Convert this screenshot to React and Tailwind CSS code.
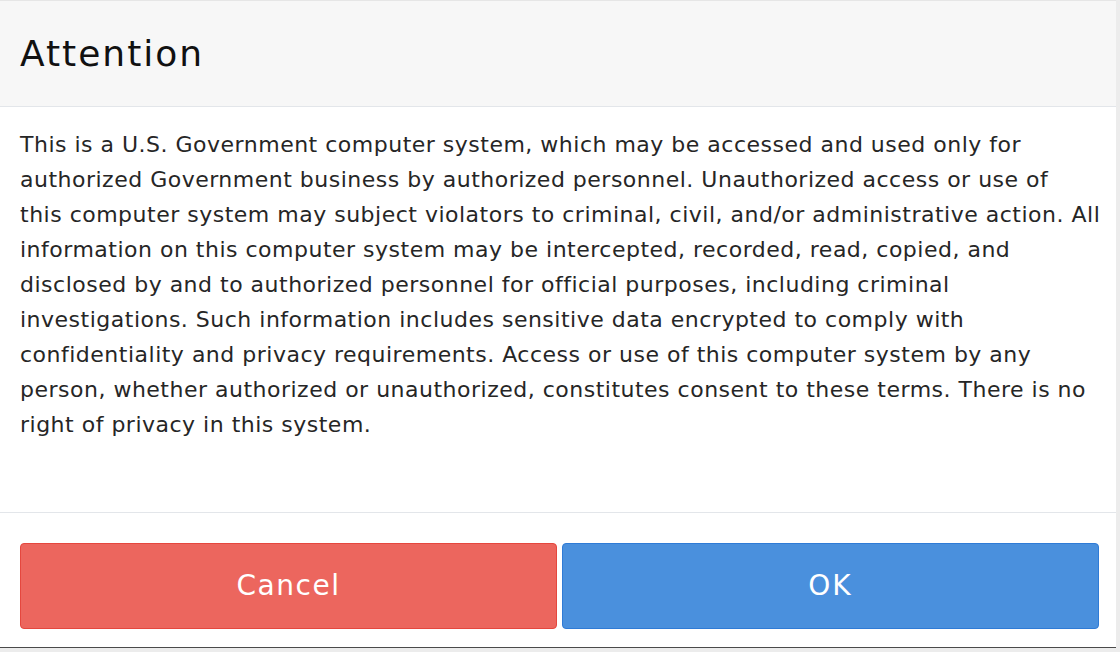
const lines = [
  'This is a U.S. Government computer system, which may be accessed and used only for',
  'authorized Government business by authorized personnel. Unauthorized access or use of',
  'this computer system may subject violators to criminal, civil, and/or administrative action. All',
  'information on this computer system may be intercepted, recorded, read, copied, and',
  'disclosed by and to authorized personnel for official purposes, including criminal',
  'investigations. Such information includes sensitive data encrypted to comply with',
  'confidentiality and privacy requirements. Access or use of this computer system by any',
  'person, whether authorized or unauthorized, constitutes consent to these terms. There is no',
  'right of privacy in this system.',
]

export default function App() {
  return (
    <div className="w-[1120px] h-[652px] bg-[#ececec] overflow-hidden font-['DejaVu_Sans',sans-serif]">
      <div className="w-[1116px] h-[648px] bg-white border-t border-[#e6e6e6] border-b border-b-[#4a4a4a] flex flex-col">
        <div className="h-[106px] bg-[#f7f7f7] border-b border-[#e3e6ea] flex items-center px-5">
          <h2 className="text-[36px] tracking-[2px] text-[#111] font-normal">Attention</h2>
        </div>
        <div className="h-[405px] pt-5 pl-5 pr-[17px] text-[22px] tracking-[0.5px] leading-[35px] text-[#262626]">
          {lines.map((l) => (
            <div key={l} className="whitespace-nowrap">{l}</div>
          ))}
        </div>
        <div className="flex-1 border-t border-[#e3e6ea] pl-5 pr-[17px] pt-[30px] flex gap-[5px]">
          <button className="flex-1 h-[86px] rounded-[4px] bg-[#ec665e] border border-[#e5473e] text-white text-[28px] tracking-[1.5px]">
            Cancel
          </button>
          <button className="flex-1 h-[86px] rounded-[4px] bg-[#4a90dd] border border-[#2f7bd6] text-white text-[28px] tracking-[2px]">
            OK
          </button>
        </div>
      </div>
    </div>
  )
}
